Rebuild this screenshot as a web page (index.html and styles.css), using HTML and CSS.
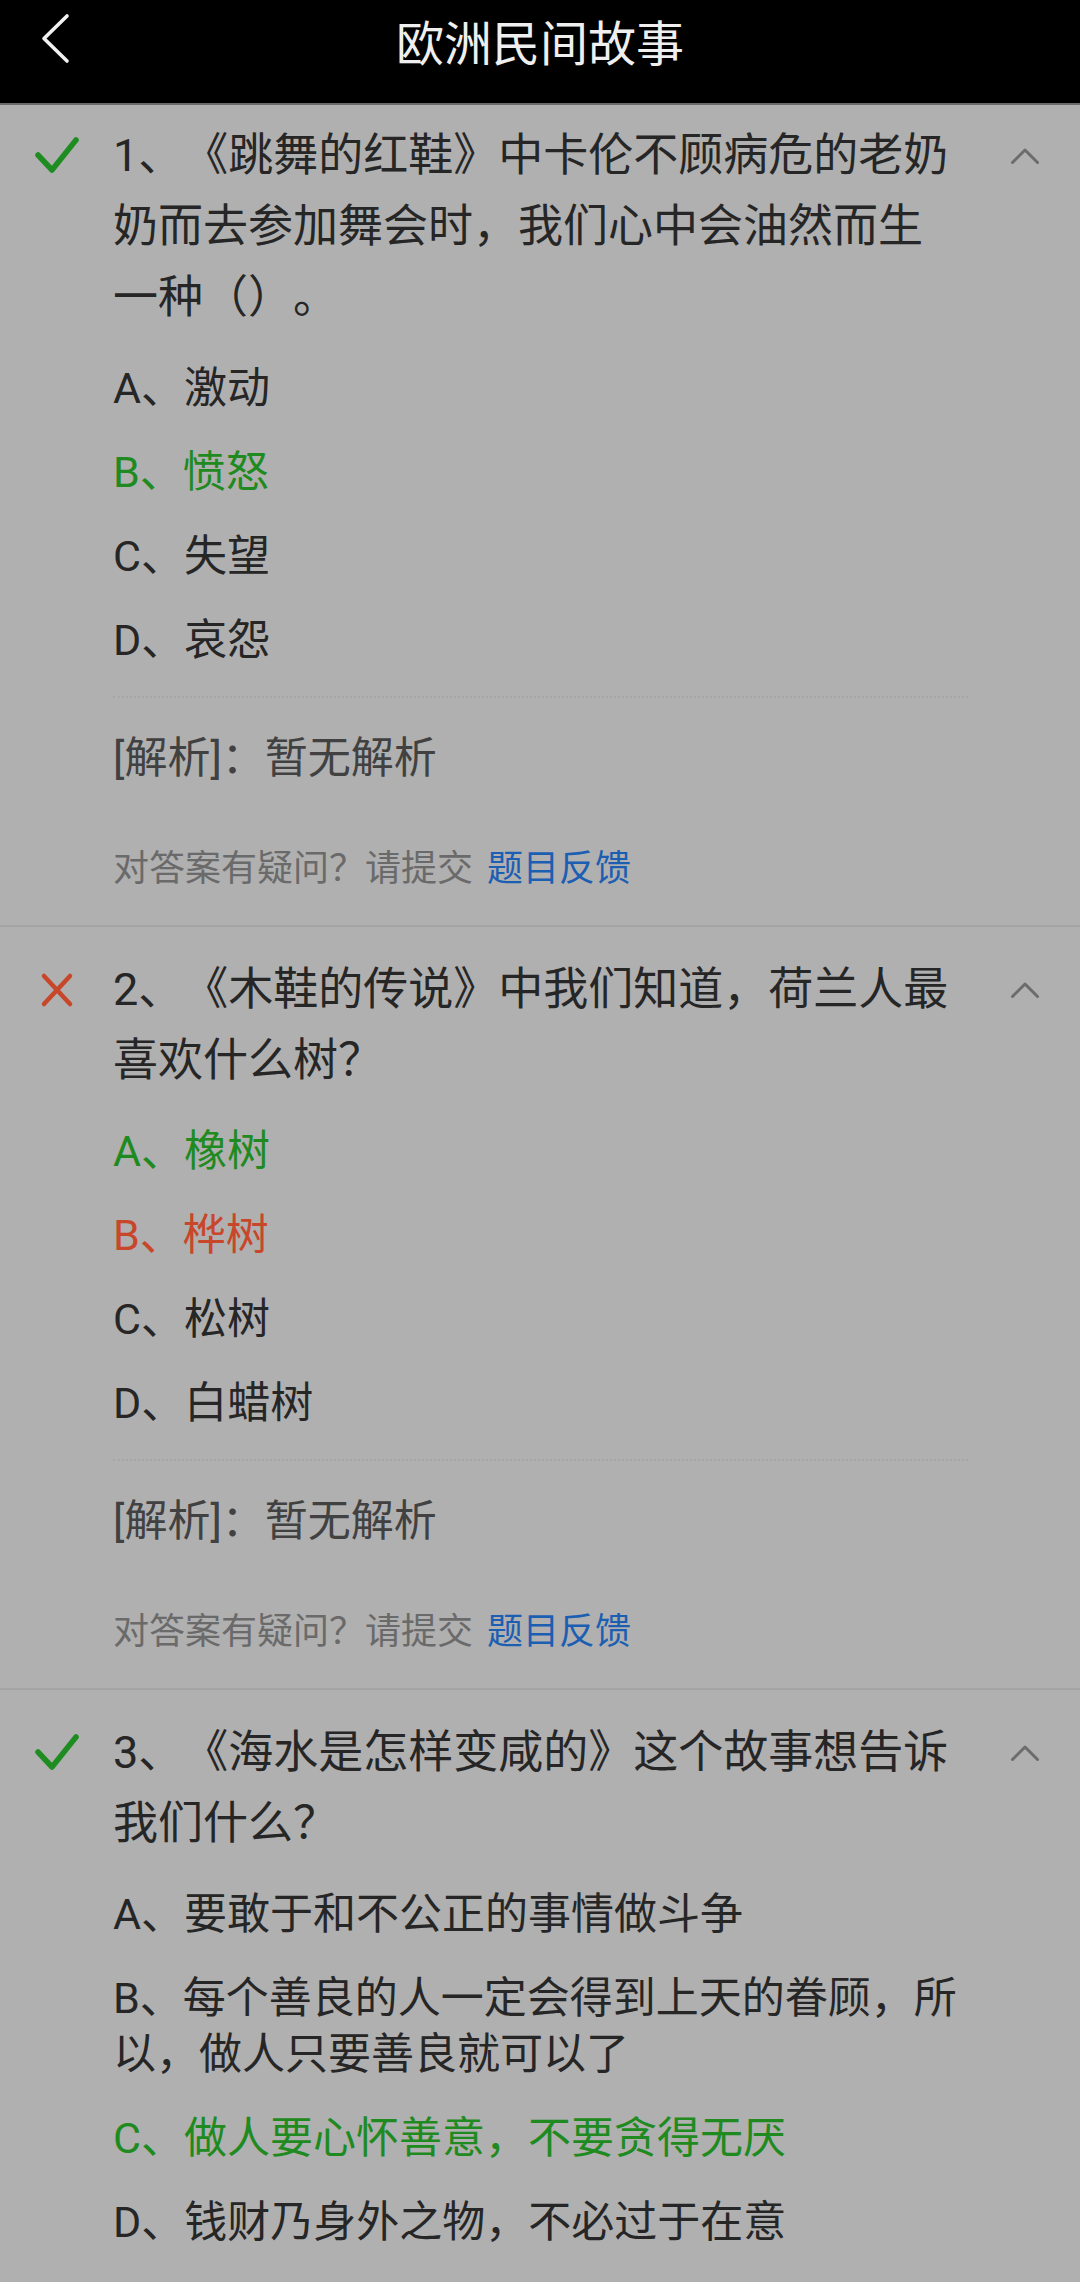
FILE: index.html
```html
<!DOCTYPE html>
<html lang="zh-CN">
<head>
<meta charset="utf-8">
<title>欧洲民间故事</title>
<link rel="stylesheet" href="styles.css">
</head>
<body>
<header class="topbar">
  <svg class="back" viewBox="0 0 32 54" width="32" height="54" aria-hidden="true"><polyline points="27,4 4,26.5 27,49" fill="none" stroke="#f2f2f2" stroke-width="3.6" stroke-linecap="round" stroke-linejoin="round"/></svg>
  <h1 class="title">欧洲民间故事</h1>
  <span class="spacer"></span>
</header>

<main class="list">
  <section class="q q-first">
    <span class="mark"><svg viewBox="0 0 44 40" width="44" height="40"><path d="M3 19 L17 34 L41 4" fill="none" stroke="#1f8c22" stroke-width="5.5" stroke-linecap="round" stroke-linejoin="round"/></svg></span>
    <div class="q-title">1、《跳舞的红鞋》中卡伦不顾病危的老奶奶而去参加舞会时，我们心中会油然而生一种（）。</div>
    <span class="fold"><svg viewBox="0 0 30 18" width="30" height="18"><polyline points="2.5,15.5 15,3 27.5,15.5" fill="none" stroke="#6c6c6c" stroke-width="3" stroke-linecap="round" stroke-linejoin="round"/></svg></span>
    <ul class="opts">
      <li>A、激动</li>
      <li class="right">B、愤怒</li>
      <li>C、失望</li>
      <li>D、哀怨</li>
    </ul>
    <div class="divider"></div>
    <div class="analysis">[解析]：暂无解析</div>
    <div class="feedback">对答案有疑问？请提交 <a class="link">题目反馈</a></div>
  </section>

  <section class="q">
    <span class="mark"><svg viewBox="0 0 36 36" width="36" height="36"><path d="M5 4 L31 32 M31 4 L5 32" fill="none" stroke="#c8472b" stroke-width="4.5" stroke-linecap="round"/></svg></span>
    <div class="q-title">2、《木鞋的传说》中我们知道，荷兰人最喜欢什么树？</div>
    <span class="fold"><svg viewBox="0 0 30 18" width="30" height="18"><polyline points="2.5,15.5 15,3 27.5,15.5" fill="none" stroke="#6c6c6c" stroke-width="3" stroke-linecap="round" stroke-linejoin="round"/></svg></span>
    <ul class="opts">
      <li class="right">A、橡树</li>
      <li class="wrong">B、桦树</li>
      <li>C、松树</li>
      <li>D、白蜡树</li>
    </ul>
    <div class="divider"></div>
    <div class="analysis">[解析]：暂无解析</div>
    <div class="feedback">对答案有疑问？请提交 <a class="link">题目反馈</a></div>
  </section>

  <section class="q q-last">
    <span class="mark"><svg viewBox="0 0 44 40" width="44" height="40"><path d="M3 19 L17 34 L41 4" fill="none" stroke="#1f8c22" stroke-width="5.5" stroke-linecap="round" stroke-linejoin="round"/></svg></span>
    <div class="q-title">3、《海水是怎样变咸的》这个故事想告诉我们什么？</div>
    <span class="fold"><svg viewBox="0 0 30 18" width="30" height="18"><polyline points="2.5,15.5 15,3 27.5,15.5" fill="none" stroke="#6c6c6c" stroke-width="3" stroke-linecap="round" stroke-linejoin="round"/></svg></span>
    <ul class="opts">
      <li>A、要敢于和不公正的事情做斗争</li>
      <li>B、每个善良的人一定会得到上天的眷顾，所以，做人只要善良就可以了</li>
      <li class="right">C、做人要心怀善意，不要贪得无厌</li>
      <li>D、钱财乃身外之物，不必过于在意</li>
    </ul>
  </section>
</main>
</body>
</html>
```

FILE: styles.css
```css
html, body {
  margin: 0;
  padding: 0;
}

body {
  background: #b0b0b0;
  font-family: Roboto, "Noto Sans CJK SC", sans-serif;
  color: #262626;
  overflow: hidden;
  text-spacing-trim: space-all;
}

.topbar {
  display: grid;
  grid-template-columns: 1fr auto 1fr;
  align-items: start;
  height: 103px;
  background: #000;
  border-bottom: 2px solid #6a6a6a;
}

.back {
  display: block;
  margin: 12px 0 0 40px;
}

.title {
  margin: 0;
  font-size: 48px;
  font-weight: 400;
  line-height: 80px;
  color: #efefef;
  font-family: "Noto Sans CJK SC", sans-serif;
}

.list {
  display: flex;
  flex-direction: column;
}

.q {
  display: grid;
  grid-template-columns: 113px 850px 1fr;
  padding: 27px 0 31px;
  border-bottom: 2px solid #a4a4a4;
}

.q-first {
  padding-top: 15px;
}

.q-last {
  border-bottom: none;
  padding-bottom: 0;
}

.mark {
  grid-column: 1;
  grid-row: 1;
  height: 71px;
  display: flex;
  align-items: center;
  justify-content: center;
}

.mark svg {
  display: block;
}

.q-title {
  grid-column: 2;
  grid-row: 1;
  font-size: 45px;
  line-height: 71px;
  color: #262626;
}

.fold {
  grid-column: 3;
  grid-row: 1;
  height: 71px;
  display: flex;
  align-items: center;
  justify-content: center;
  padding-left: 7px;
}

.fold svg {
  display: block;
}

.opts {
  grid-column: 2;
  list-style: none;
  margin: 0;
  padding: 13px 0 0;
}

.opts li {
  font-size: 43px;
  line-height: 56px;
  padding: 14px 0;
  color: #262626;
}

.opts li.right {
  color: #1f8a20;
}

.opts li.wrong {
  color: #c8462a;
}

.divider {
  grid-column: 2 / span 2;
  margin: 14px 112px 0 0;
  height: 0;
  border-top: 2px dotted #a6a6a6;
}

.analysis {
  grid-column: 2;
  margin-top: 32px;
  font-size: 43px;
  line-height: 56px;
  color: #414141;
  word-spacing: 0;
}

.feedback {
  grid-column: 2;
  margin-top: 58px;
  font-size: 36px;
  line-height: 50px;
  color: #6a6a6a;
}

.link {
  margin-left: 5px;
  color: #1c5fb2;
  text-decoration: none;
}
```
